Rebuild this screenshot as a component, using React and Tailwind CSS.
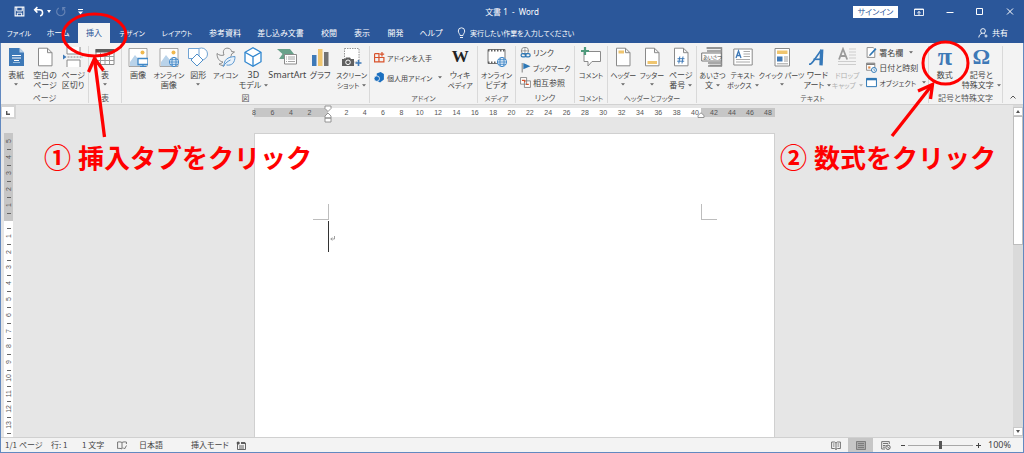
import React from "react";

/* ---------- small drawings ---------- */

const Svg = ({ children, className = "h-5 w-5" }) => (
  <svg viewBox="0 0 20 20" className={className} fill="none" aria-hidden="true">
    {children}
  </svg>
);

const Caret = ({ faded }) => (
  <svg viewBox="0 0 4 3" className="h-[3px] w-1 shrink-0" aria-hidden="true">
    <path d="M0 .3h4L2 2.6z" fill={faded ? "#b5b5b5" : "#666"} />
  </svg>
);

const Globe = ({ x, y, r = 5 }) => (
  <g transform={`translate(${x} ${y})`} stroke="#3f87c7" strokeWidth=".9">
    <circle r={r} fill="#eaf2fa" />
    <ellipse rx={r * 0.45} ry={r} />
    <path d={`M${-r} 0H${r}M${-r * 0.85} ${-r * 0.5}H${r * 0.85}M${-r * 0.85} ${r * 0.5}H${r * 0.85}`} />
  </g>
);

const Photo = () => (
  <>
    <path d="M1 1.5h18v18H1z" fill="#fff" stroke="#8f8f8f" strokeWidth=".8" />
    <path d="M2 15l5-7 4 5 2-2 5 5v3H2z" fill="#b9d3ea" />
    <circle cx="14.5" cy="5.5" r="2" fill="#efb84e" />
  </>
);

const PageShape = () => (
  <path d="M3.5 1.2h9l4.500 4.500v13.100H3.500z M12.500 1.200v4.500h4.500" fill="#fff" stroke="#8a8a8a" strokeWidth="1" />
);

const icons = {
  cover: (
    <Svg>
      <path d="M3 1h10.500L18 5.500V19H3z" fill="#3e79b7" />
      <path d="M13.500 1v4.500H18z" fill="#b8d0e8" />
      <path d="M6 8.500h9M6 11h9M8 13.500h5" stroke="#fff" />
      <path d="M7 15.500h7" stroke="#9cc0e0" />
    </Svg>
  ),
  blank: <Svg><PageShape /></Svg>,
  pageBreak: (
    <Svg>
      <path d="M4 0v7h13V0M4 20v-7h13v7" fill="#fff" stroke="#8a8a8a" />
      <path d="M4.500 10H20" stroke="#8a8a8a" strokeDasharray="2 1" />
      <path d="M0 7.500v5L3.500 10z" fill="#3e79b7" />
    </Svg>
  ),
  table: (
    <Svg>
      <path d="M1 2.500h18v15H1z" fill="#fff" stroke="#8a8a8a" />
      <path d="M.5 2h19v3.500H.5z" fill="#5d5d5d" />
      <path d="M1 9.500h18M1 13.500h18M5.500 5v12M10 5v12M14.500 5v12" stroke="#9a9a9a" />
    </Svg>
  ),
  picture: (
    <Svg>
      <Photo />
      <path d="M10 11.500h10v6H10z" fill="#fff" stroke="#3f87c7" strokeWidth="1.300" />
      <path d="M15 17.500v2M12 19.500h6" stroke="#3f87c7" strokeWidth="1.200" />
    </Svg>
  ),
  online: <Svg><Photo /><Globe x={15} y={15} r={4.6} /></Svg>,
  shapes: (
    <Svg>
      <circle cx="13.500" cy="7" r="6" fill="#fff" stroke="#70a3d3" />
      <path d="M.5 1.500H11v10H.5z" fill="#fff" stroke="#70a3d3" />
      <path d="M9 7l6 6-6 6-6-6z" fill="#fff" stroke="#4f8fca" />
    </Svg>
  ),
  bird: (
    <Svg>
      <path d="M8 8C6 3 9 .8 12 1.200c2.500.3 3.500 2 3.500 3.300l3 .5-3 2c0 2-1 3-2 4M8 8C5 9 3 8 1 6.500c0 5 2.500 8 6 8.500-1.500 1.500-3 2-4 2 2 1.500 4 1.800 6 1" stroke="#8a8a8a" />
      <path d="M8 19c0-6 3-9 11-9.500 0 6-3 9.500-8.500 8.500M7 20c1.500-3 4-5.500 7.500-7" fill="#e8f1fa" stroke="#5b98d0" />
    </Svg>
  ),
  cube: (
    <Svg>
      <path d="M10 .8l8 4.500v9.400l-8 4.500-8-4.500V5.300z" fill="#fff" stroke="#2f86cf" strokeWidth="1.300" />
      <path d="M2 5.300l8 4.500 8-4.500M10 9.800v9.400" stroke="#2f86cf" strokeWidth="1.300" />
    </Svg>
  ),
  smartArt: (
    <Svg>
      <path d="M0 2h13l4 5-4 5H2l3.500-5z" fill="#69a18a" />
      <path d="M7.500 7.500h12V17h-12z" fill="#fff" stroke="#8a8a8a" />
      <path d="M9 10h1M9 12h1M9 14.500h1M11 10h7M11 12h7M11 14.500h7" stroke="#9a9a9a" strokeWidth=".9" />
    </Svg>
  ),
  chart: (
    <Svg>
      <path d="M2 8h4.500v11H2z" fill="#3e79b7" />
      <path d="M8 2h4.500v17H8z" fill="#efc56f" />
      <path d="M14 5h4.500v14H14z" fill="#737373" />
    </Svg>
  ),
  screenshot: (
    <Svg>
      <path d="M2.500 1.500h14.500V15H2.500z" fill="#fff" stroke="#8a8a8a" strokeDasharray="1.500 1" strokeWidth=".9" />
      <path d="M0 12h3l1-1.500h4L9 12h3v7H0z" fill="#606060" />
      <circle cx="6" cy="15.300" r="2.300" fill="#606060" stroke="#fff" />
      <path d="M16.500 13v6M13.500 16h6" stroke="#3e79b7" strokeWidth="1.600" />
    </Svg>
  ),
  video: (
    <Svg>
      <path d="M1 2.500h17v14H1z" fill="#fff" stroke="#777" />
      <path d="M1 3.500h17M1 15.500h17" stroke="#5f5f5f" strokeWidth="2" strokeDasharray="1.500 1.500" />
      <Globe x={15} y={15} r={4.6} />
    </Svg>
  ),
  comment: (
    <Svg>
      <path d="M3 4.500h16.500v10H11L7 19v-4.500H3z" fill="#fff" stroke="#8a8a8a" />
      <path d="M4 0v8M0 4h8" stroke="#4f9a7c" strokeWidth="2.200" />
    </Svg>
  ),
  header: <Svg><PageShape /><path d="M5.500 3.500H11v3H5.500z" fill="#efc56f" /></Svg>,
  footer: <Svg><PageShape /><path d="M5.500 14h9.500v3H5.500z" fill="#efc56f" /></Svg>,
  pageNumber: (
    <Svg>
      <PageShape />
      <path d="M8.800 9.500l-1 7M12 9.500l-1 7M6.500 11.700h7M6.200 14.200h7" stroke="#3e79b7" />
    </Svg>
  ),
  greeting: (
    <span className="relative flex h-5 w-[22px] items-center justify-center">
      <svg viewBox="0 0 22 20" className="absolute inset-0 h-5 w-[22px]" fill="none" aria-hidden="true">
        <path d="M5.500 1h15v17.500h-12" fill="#ececec" stroke="#8a8a8a" strokeWidth="1.500" />
        <path d="M6 1h15M6 4h15M7 16h14M7 19h14" stroke="#909090" strokeWidth="1.300" />
        <path d="M.7 6h19.600v8H.7z" fill="#fff" stroke="#777" />
      </svg>
      <span className="relative whitespace-nowrap text-[5px] leading-[8px]">あいさつ</span>
    </span>
  ),
  textBox: (
    <Svg>
      <path d="M.8 2h18.400v16H.8z" fill="#fff" stroke="#8a8a8a" />
      <path d="M3 11l2.500-7L8 11M4 8.500h3" stroke="#3e79b7" strokeWidth="1.300" />
      <path d="M10.500 4.500H17M10.500 7H17M10.500 9.500H17M3 12.500h14M3 15h14" stroke="#a0a0a0" strokeWidth=".9" />
    </Svg>
  ),
  quickParts: (
    <Svg>
      <path d="M3 1.500h14.500v17.500H3z" fill="#fff" stroke="#8a8a8a" />
      <path d="M5 3.500h10.500v3.500H5z" fill="#efc56f" />
      <path d="M5 9.500h5.500v5H5z" fill="#3e79b7" />
      <path d="M12 10h4M12 12h4M12 14h4M5 16.800h11" stroke="#a0a0a0" />
    </Svg>
  ),
  wordArt: (
    <Svg>
      <path d="M2 17.300c2 0 3-1 4.500-3.300L14.200 3" stroke="#3578b9" strokeWidth="1.600" />
      <path d="M14.700 2.500L14 18.300" stroke="#3578b9" strokeWidth="3.400" />
      <path d="M6.500 12.300h7.500" stroke="#3578b9" strokeWidth="1.700" />
    </Svg>
  ),
  dropCap: (
    <Svg>
      <path d="M2 12.500L6 2l4.200 10.500M3.500 9h5.200" stroke="#9b9b9b" strokeWidth="1.800" />
      <path d="M12 2h7M12 5h7M12 8h7M12 11h7M1 14.500h18M1 17.500h18" stroke="#cdcdcd" strokeWidth="1.200" />
    </Svg>
  ),
};

const mini = {
  addins: (
    <Svg className="h-[11px] w-[11px]">
      <path d="M1 3h8v14M1 3v15h17v-8H1" stroke="#d9532c" strokeWidth="2.200" />
      <path d="M14.500 0v8M10.500 4h8" stroke="#d9532c" strokeWidth="2.200" />
    </Svg>
  ),
  myAddins: (
    <Svg className="h-[11px] w-[11px]">
      <path d="M5 2.500L12 0l6 3.500v10L11 19l-6-3z" fill="#1b6fc0" />
      <circle cx="5" cy="12" r="5" fill="#1b6fc0" stroke="#f3f3f3" strokeWidth="1.500" />
    </Svg>
  ),
  link: (
    <Svg className="h-[11px] w-[11px]">
      <circle cx="9" cy="7" r="6.500" fill="#fff" stroke="#7c7c7c" strokeWidth="1.600" />
      <path d="M9 .5v13M2.500 7h13" stroke="#7c7c7c" strokeWidth="1.300" />
      <rect x="2" y="12" width="9" height="6" rx="3" stroke="#2d77b5" strokeWidth="2.200" />
      <rect x="9.500" y="12" width="9" height="6" rx="3" stroke="#2d77b5" strokeWidth="2.200" />
    </Svg>
  ),
  bookmark: (
    <Svg className="h-[11px] w-[11px]">
      <path d="M4 2v17" stroke="#8a8a8a" strokeWidth="2" />
      <path d="M6 2l13 5.500L6 13z" fill="#2d77b5" />
    </Svg>
  ),
  crossRef: (
    <Svg className="h-[11px] w-[11px]">
      <path d="M1 1h11v12H1zM8 7h11v12H8z" fill="#fff" stroke="#7c7c7c" strokeWidth="1.500" />
      <path d="M3.500 6h5v4M11 13.500h5" stroke="#d9532c" strokeWidth="2.400" />
    </Svg>
  ),
  signature: (
    <Svg className="h-[11px] w-[11px]">
      <path d="M2 1h11l3 3v15H2z" fill="#fff" stroke="#7c7c7c" strokeWidth="1.500" />
      <path d="M7 15L18 3" stroke="#2d77b5" strokeWidth="3" />
      <path d="M5 17l3-3" stroke="#7c7c7c" strokeWidth="1.500" />
    </Svg>
  ),
  date: (
    <Svg className="h-[11px] w-[11px]">
      <path d="M1 2h15v13H1z" fill="#fff" stroke="#7c7c7c" strokeWidth="1.500" />
      <path d="M1 4h15" stroke="#7c7c7c" strokeWidth="3" />
      <path d="M4 8h4v4H4z" fill="#e08a4a" />
      <circle cx="14.500" cy="14.500" r="4.500" fill="#fff" stroke="#2d77b5" strokeWidth="1.800" />
      <path d="M14.500 12v3h2" stroke="#2d77b5" strokeWidth="1.300" />
    </Svg>
  ),
  object: (
    <Svg className="h-[11px] w-[11px]">
      <path d="M1 2.500h18v15H1z" fill="#fff" stroke="#2d77b5" strokeWidth="1.800" />
      <path d="M1 4h18" stroke="#2d77b5" strokeWidth="4" />
    </Svg>
  ),
};

/* ---------- ribbon pieces ---------- */

/* Long labels that are mostly kana are set one size down. */
function labelSize(text) {
  const kana = (text.match(/[\u3041-\u30ff]/g) || []).length;
  return text.length >= 4 && kana / text.length > 0.5 ? "text-[7px]" : "text-[8px]";
}

function Tool({ icon, lines, caret, faded, latin }) {
  const onLast = caret && lines.length > 1;
  return (
    <button type="button" className={`flex min-w-0 flex-col items-center ${faded ? "text-[#b0b0b0]" : ""}`}>
      <span className="mb-[3px] flex h-5 items-center justify-center">{icon}</span>
      {lines.map((line, i) => (
        <span
          key={line}
          className={`flex items-center gap-[3px] whitespace-nowrap leading-[10px] ${
            latin && i === 0 ? "font-['Noto_Sans'] text-[9px]" : labelSize(line)
          }`}
        >
          {line}
          {onLast && i === lines.length - 1 && <Caret faded={faded} />}
        </span>
      ))}
      {caret && !onLast && (
        <span className="flex h-2 items-center"><Caret faded={faded} /></span>
      )}
    </button>
  );
}

function Item({ icon, text, caret }) {
  return (
    <button type="button" className={`flex items-center gap-[2px] whitespace-nowrap leading-[10px] ${labelSize(text)}`}>
      {icon}
      <span>{text}</span>
      {caret && <span className="ml-1"><Caret /></span>}
    </button>
  );
}

function Group({ name, cols, children }) {
  return (
    <section aria-label={name} className="flex min-w-0 flex-col border-r border-[#d9d9d9] pt-px">
      <div className={`grid flex-1 items-start ${cols}`}>{children}</div>
      <h2 className={`whitespace-nowrap text-center leading-[10px] text-[#555] ${labelSize(name)}`}>{name}</h2>
    </section>
  );
}

const tabs = [
  ["ファイル", "w-[38px]"],
  ["ホーム", "w-10"],
  ["挿入", "w-8"],
  ["デザイン", "w-11"],
  ["レイアウト", "w-[46px]"],
  ["参考資料", "w-[50px]"],
  ["差し込み文書", "w-[61px]"],
  ["校閲", "w-9"],
  ["表示", "w-[30px]"],
  ["開発", "w-[37px]"],
  ["ヘルプ", "w-[34px]"],
];

function TitleBar() {
  return (
    <header className="grid h-[23px] shrink-0 grid-cols-[1fr_auto_1fr] items-center bg-[#2b579a] text-white">
      <div className="flex items-center gap-1 pl-[14px]">
        <button type="button" aria-label="上書き保存">
          <Svg className="h-[11px] w-[11px]">
            <path d="M2 2h16v16H2z" stroke="#fff" strokeWidth="2" />
            <path d="M5 2v7h10V2M6 18v-5h8v5" stroke="#fff" strokeWidth="1.800" />
          </Svg>
        </button>
        <button type="button" aria-label="元に戻す" className="ml-1 flex items-center gap-[3px]">
          <Svg className="h-[11px] w-[11px]">
            <path d="M8 2L3 7l5 5M3 7h9c7 0 7 9 1 11" stroke="#fff" strokeWidth="2.800" />
          </Svg>
          <svg viewBox="0 0 4 3" className="h-[3px] w-1" aria-hidden="true"><path d="M0 0h4L2 3z" fill="#fff" /></svg>
        </button>
        <button type="button" aria-label="やり直し">
          <Svg className="h-[11px] w-[11px]">
            <path d="M7 3.500a7.500 7.500 0 1 0 7 0M14 8V3h5" stroke="#6684b5" strokeWidth="2" />
          </Svg>
        </button>
        <button type="button" aria-label="クイック アクセス ツール バーのカスタマイズ" className="ml-2">
          <svg viewBox="0 0 5 6" className="h-[6px] w-[5px]" aria-hidden="true"><path d="M0 0h5v1H0zM0 2.500h5L2.500 5.500z" fill="#fff" /></svg>
        </button>
      </div>
      <h1 className="whitespace-pre font-['Noto_Sans','Noto_Sans_CJK_JP',sans-serif] text-[8px] leading-[12px]">文書 1  -  Word</h1>
      <div className="flex items-center justify-end pr-[10px]">
        <button type="button" className="h-3 w-[45px] bg-white text-[8px] leading-[12px] text-[#2b579a]">サインイン</button>
        <button type="button" aria-label="リボンの表示オプション" className="ml-4">
          <svg viewBox="0 0 10 8" className="h-2 w-[10px]" fill="none" stroke="#fff" aria-hidden="true">
            <path d="M.5 1h9v6.500h-9zM.5 1.500h9M5 7V3.500M3.300 5L5 3.500 6.700 5" strokeWidth=".9" />
          </svg>
        </button>
        <button type="button" aria-label="最小化" className="ml-[22px]">
          <svg viewBox="0 0 8 8" className="h-2 w-2" stroke="#fff" aria-hidden="true"><path d="M.5 4.500h7" /></svg>
        </button>
        <button type="button" aria-label="最大化" className="ml-[22px]">
          <svg viewBox="0 0 8 8" className="h-2 w-2" fill="none" stroke="#fff" aria-hidden="true"><path d="M.5 .500h6v6h-6z" /></svg>
        </button>
        <button type="button" aria-label="閉じる" className="ml-[22px]">
          <svg viewBox="0 0 8 8" className="h-2 w-2" fill="none" stroke="#fff" aria-hidden="true"><path d="M1 .5l6 6M7 .5l-6 6" /></svg>
        </button>
      </div>
    </header>
  );
}

function TabRow() {
  return (
    <nav className="flex h-5 shrink-0 items-stretch bg-[#2b579a] text-[8px] text-white">
      {tabs.map(([name, width]) => (
        <button
          key={name}
          type="button"
          className={`whitespace-nowrap text-center ${width} ${name === "挿入" ? "bg-[#f3f3f3] text-[#2b579a]" : ""} ${labelSize(name)}`}
        >
          {name}
        </button>
      ))}
      <label className="ml-[9px] flex items-center gap-1">
        <svg viewBox="0 0 9 12" className="h-3 w-[9px]" fill="none" stroke="#fff" aria-hidden="true">
          <path d="M3 8.500C3 7 1.300 6 1.300 4a3.200 3.200 0 0 1 6.400 0C7.700 6 6 7 6 8.500zM3 10.500h3" strokeWidth=".9" />
        </svg>
        <input
          type="text"
          aria-label="操作アシスト"
          placeholder="実行したい作業を入力してください"
          className="w-36 bg-transparent text-[7px] leading-[12px] outline-none placeholder:text-white"
        />
      </label>
      <button type="button" className="ml-auto flex items-center gap-1 pr-4">
        <svg viewBox="0 0 10 10" className="h-[10px] w-[10px]" fill="none" stroke="#fff" aria-hidden="true">
          <circle cx="5" cy="3" r="2.400" strokeWidth=".9" />
          <path d="M.8 9.500C1 7 2.500 5.800 4 5.400M6 5.400l1 .6M8 6.500v3M6.500 8h3" strokeWidth=".9" />
        </svg>
        共有
      </button>
    </nav>
  );
}

function Ribbon() {
  return (
    <div className="grid h-[62px] shrink-0 grid-cols-[88fr_33fr_248fr_108fr_38fr_59fr_33fr_89fr_232fr_74fr_20fr] border-b border-[#d2d2d2] bg-[#f3f3f3] pb-px pt-[3px] text-[#444]">
      <Group name="ページ" cols="grid-cols-[31fr_27fr_30fr]">
        <Tool icon={icons.cover} lines={["表紙"]} caret />
        <Tool icon={icons.blank} lines={["空白の", "ページ"]} />
        <Tool icon={icons.pageBreak} lines={["ページ", "区切り"]} />
      </Group>
      <Group name="表" cols="grid-cols-1">
        <Tool icon={icons.table} lines={["表"]} caret />
      </Group>
      <Group name="図" cols="grid-cols-[32fr_30fr_29fr_26fr_30fr_38fr_28fr_35fr]">
        <Tool icon={icons.picture} lines={["画像"]} />
        <Tool icon={icons.online} lines={["オンライン", "画像"]} />
        <Tool icon={icons.shapes} lines={["図形"]} caret />
        <Tool icon={icons.bird} lines={["アイコン"]} />
        <Tool icon={icons.cube} lines={["3D", "モデル"]} latin caret />
        <Tool icon={icons.smartArt} lines={["SmartArt"]} latin />
        <Tool icon={icons.chart} lines={["グラフ"]} />
        <Tool icon={icons.screenshot} lines={["スクリーン", "ショット"]} caret />
      </Group>
      <Group name="アドイン" cols="grid-cols-[74fr_34fr]">
        <div className="flex flex-col items-start gap-[9px] pl-1 pt-[5px]">
          <Item icon={mini.addins} text="アドインを入手" />
          <Item icon={mini.myAddins} text="個人用アドイン" caret />
        </div>
        <Tool
          icon={<span className="font-['Liberation_Serif'] text-[17px] font-bold leading-5 text-[#222]">W</span>}
          lines={["ウィキ", "ペディア"]}
        />
      </Group>
      <Group name="メディア" cols="grid-cols-1">
        <Tool icon={icons.video} lines={["オンライン", "ビデオ"]} />
      </Group>
      <Group name="リンク" cols="grid-cols-1">
        <div className="flex flex-col items-start gap-1 pl-1">
          <Item icon={mini.link} text="リンク" />
          <Item icon={mini.bookmark} text="ブックマーク" />
          <Item icon={mini.crossRef} text="相互参照" />
        </div>
      </Group>
      <Group name="コメント" cols="grid-cols-1">
        <Tool icon={icons.comment} lines={["コメント"]} />
      </Group>
      <Group name="ヘッダーとフッター" cols="grid-cols-[31fr_27fr_31fr]">
        <Tool icon={icons.header} lines={["ヘッダー"]} caret />
        <Tool icon={icons.footer} lines={["フッター"]} caret />
        <Tool icon={icons.pageNumber} lines={["ページ", "番号"]} caret />
      </Group>
      <Group name="テキスト" cols="grid-cols-[31fr_30fr_48fr_24fr_36fr_63fr]">
        <Tool icon={icons.greeting} lines={["あいさつ", "文"]} caret />
        <Tool icon={icons.textBox} lines={["テキスト", "ボックス"]} caret />
        <Tool icon={icons.quickParts} lines={["クイック パーツ"]} caret />
        <Tool icon={icons.wordArt} lines={["ワード", "アート"]} caret />
        <Tool icon={icons.dropCap} lines={["ドロップ", "キャップ"]} caret faded />
        <div className="flex flex-col items-start gap-1 pl-px">
          <Item icon={mini.signature} text="署名欄" caret />
          <Item icon={mini.date} text="日付と時刻" />
          <Item icon={mini.object} text="オブジェクト" caret />
        </div>
      </Group>
      <Group name="記号と特殊文字" cols="grid-cols-[32fr_42fr]">
        <Tool
          icon={<span className="font-['Liberation_Serif'] text-[26px] font-bold leading-5 text-[#3e79b7]">π</span>}
          lines={["数式"]}
        />
        <Tool
          icon={<span className="font-['Liberation_Serif'] text-[22px] font-bold leading-5 text-[#3e79b7]">Ω</span>}
          lines={["記号と", "特殊文字"]}
          caret
        />
      </Group>
      <button type="button" aria-label="リボンを折りたたむ" className="flex items-end justify-center pb-1">
        <svg viewBox="0 0 6 4" className="h-1 w-[6px]" fill="none" stroke="#555" aria-hidden="true"><path d="M.5 3.500L3 1l2.500 2.500" /></svg>
      </button>
    </div>
  );
}

/* ---------- rulers and document ---------- */

const Mark = ({ children }) => (
  <span className="flex w-0 justify-center whitespace-nowrap">{children}</span>
);

function HorizontalRuler() {
  const main = Array.from({ length: 20 }, (_, i) => (i + 1) * 2);
  return (
    <div className="relative flex h-[9px] w-[521px] font-['Liberation_Sans'] text-[7px] leading-[9px] text-[#555]">
      <div className="grid w-[74px] grid-cols-4 bg-[#c6c6c6]">
        {[8, 6, 4, 2].map((n) => <Mark key={n}>{n}</Mark>)}
      </div>
      <div className="grid flex-1 grid-cols-[repeat(20,1fr)] justify-items-end bg-white pr-[6px]">
        {main.map((n) => <Mark key={n}>{n}</Mark>)}
      </div>
      <div className="grid w-[74px] grid-cols-[repeat(4,18px)] justify-items-center bg-[#c6c6c6] pl-1">
        {[42, 44, 46, 48].map((n) => <Mark key={n}>{n}</Mark>)}
      </div>
      <svg viewBox="0 0 8 18" className="absolute -top-[3px] left-[70px] h-[18px] w-2" fill="#fff" stroke="#8a8a8a" aria-hidden="true">
        <path d="M1 1h6v2.500L4 6.500 1 3.500zM4 8l3 3v2H1v-2zM1 13h6v4H1z" strokeWidth=".9" />
      </svg>
      <svg viewBox="0 0 8 6" className="absolute left-[443px] top-1 h-[6px] w-2" fill="#fff" stroke="#8a8a8a" aria-hidden="true">
        <path d="M4 .8l3 2.700v2H1v-2z" strokeWidth=".9" />
      </svg>
    </div>
  );
}

const VNum = ({ children }) => (
  <span className="rotate-180 leading-[9px] [writing-mode:vertical-rl]">{children}</span>
);

function VerticalRuler() {
  return (
    <div className="ml-[3px] flex w-[9px] flex-1 flex-col overflow-hidden bg-white font-['Liberation_Sans'] text-[7px] text-[#555]">
      <div className="grid h-[88px] shrink-0 grid-rows-5 items-center justify-items-center bg-[#c6c6c6] pb-2">
        {[5, 4, 3, 2, 1].map((n) => (
          <span key={n} className="relative flex h-full w-full items-center justify-center">
            <VNum>{n}</VNum>
            <i className="absolute -bottom-px h-px w-1 bg-[#666]" />
          </span>
        ))}
      </div>
      <div className="mt-[7px] grid h-[205px] shrink-0 grid-rows-[repeat(13,1fr)]">
        {Array.from({ length: 13 }, (_, i) => (
          <span key={i} className="relative flex items-center justify-center">
            <i className="absolute top-0 h-px w-1 bg-[#666]" />
            <VNum>{i + 1}</VNum>
          </span>
        ))}
      </div>
      <i className="mx-auto h-px w-1 shrink-0 bg-[#666]" />
    </div>
  );
}

function ScrollBar() {
  return (
    <div className="flex w-[10px] shrink-0 flex-col bg-[#dadada] pt-[2px]">
      <button type="button" aria-label="上へスクロール" className="flex h-[9px] items-center justify-center border border-[#c9c9c9] bg-white">
        <svg viewBox="0 0 4 3" className="h-[3px] w-1" aria-hidden="true"><path d="M0 3h4L2 0z" fill="#555" /></svg>
      </button>
      <div className="h-[129px] border border-[#bdbdbd] bg-white" />
      <button type="button" aria-label="下へスクロール" className="mb-px mt-auto flex h-[9px] items-center justify-center border border-[#c9c9c9] bg-white">
        <svg viewBox="0 0 4 3" className="h-[3px] w-1" aria-hidden="true"><path d="M0 0h4L2 3z" fill="#555" /></svg>
      </button>
    </div>
  );
}

function Workspace() {
  return (
    <main className="flex min-h-0 flex-1 bg-[#e6e6e6]">
      <div className="flex w-[15px] shrink-0 flex-col">
        <div className="mb-[14px] flex h-[14px] items-end justify-center border-2 border-l border-[#d4d4d4] bg-white pb-[2px]">
          <svg viewBox="0 0 4 4" className="h-1 w-1" fill="none" stroke="#555" aria-hidden="true"><path d="M.7 0v3.300H4" strokeWidth="1.400" /></svg>
        </div>
        <VerticalRuler />
      </div>
      <div className="flex min-w-0 flex-1 flex-col items-center pt-[3px]">
        <HorizontalRuler />
        <article className="mt-4 flex w-[521px] flex-1 flex-col border border-b-0 border-[#d0d0d0] bg-white pl-[58px] pr-[57px] pt-[70px]">
          <div className="flex h-4 justify-between">
            <i className="w-4 border-b border-r border-[#bdbdbd]" />
            <i className="w-4 border-b border-l border-[#bdbdbd]" />
          </div>
          <div className="ml-[15px] mt-px flex h-[31px] items-center">
            <i className="h-full w-px bg-[#333]" />
            <svg viewBox="0 0 5 5" className="ml-px mt-1 h-[5px] w-[5px]" fill="none" stroke="#888" aria-hidden="true">
              <path d="M4.500 0v3H.8M2.300 1.500L.8 3l1.500 1.500" strokeWidth=".8" />
            </svg>
          </div>
        </article>
      </div>
      <ScrollBar />
    </main>
  );
}

function StatusBar() {
  return (
    <footer className="flex h-[15px] shrink-0 items-stretch border-t border-[#d0d0d0] bg-[#f3f3f3] text-[8px] leading-[14px] text-[#444]">
      <div className="flex items-center whitespace-nowrap pl-1">
        <span className="w-[46px]">1/1 ページ</span>
        <span className="w-[31px]">行: 1</span>
        <span className="w-[35px]">1 文字</span>
        <svg viewBox="0 0 10 9" className="h-[9px] w-[10px]" fill="none" stroke="#666" aria-hidden="true">
          <path d="M5 1.500C4 .8 2 .8.600 1v6.500c1.400-.2 3.400-.2 4.400.5V1.500C6 .8 8 .8 9.400 1v2M6 6.500L7.500 8l2-3.500" strokeWidth=".9" />
        </svg>
        <span className="ml-3 w-[52px]">日本語</span>
        <span className="w-[45px]">挿入モード</span>
        <svg viewBox="0 0 10 9" className="h-[9px] w-[10px]" fill="none" stroke="#555" aria-hidden="true">
          <path d="M1.500 3v5.500h8V2H5M3 5h5M3 7h5" strokeWidth=".9" />
          <circle cx="2.200" cy="2" r="1.600" fill="#555" stroke="none" />
          <path d="M5 2h4" strokeWidth="1.800" />
        </svg>
      </div>
      <div className="ml-auto flex items-stretch pr-3">
        <button type="button" aria-label="閲覧モード" className="flex w-6 items-center justify-center">
          <svg viewBox="0 0 10 9" className="h-[9px] w-[10px]" fill="none" stroke="#666" aria-hidden="true">
            <path d="M5 2v6.500M.6 1h3L5 2l1.400-1h3v6.500h-3L5 8.500l-1.400-1h-3zM2 3h1.500M2 5h1.500M6.500 3H8M6.500 5H8" strokeWidth=".9" />
          </svg>
        </button>
        <button type="button" aria-label="印刷レイアウト" className="flex w-[25px] items-center justify-center bg-[#c6c6c6]">
          <svg viewBox="0 0 10 9" className="h-[9px] w-[10px]" fill="#a8a8a8" stroke="#777" aria-hidden="true">
            <path d="M.5.5h9v8h-9zM2 2.500h6M2 4.500h6M2 6.500h6" strokeWidth=".9" />
          </svg>
        </button>
        <button type="button" aria-label="Web レイアウト" className="flex w-[25px] items-center justify-center">
          <svg viewBox="0 0 10 9" className="h-[9px] w-[10px]" fill="none" stroke="#666" aria-hidden="true">
            <path d="M4 8H.7V.6h7.600V3M2 2.500h5M2 4.500h2.500M2 6.200h2" strokeWidth=".9" />
            <circle cx="7" cy="6.300" r="2.200" strokeWidth="1" />
            <path d="M5.500 5l3 2.500" strokeWidth=".8" />
          </svg>
        </button>
        <button type="button" aria-label="縮小" className="flex w-[10px] items-center justify-center">
          <i className="h-px w-1 bg-[#444]" />
        </button>
        <label className="flex items-center">
          <input
            type="range"
            aria-label="ズーム"
            min="0"
            max="100"
            defaultValue="50"
            className="h-px w-[65px] appearance-none bg-[#a8a8a8] [&::-webkit-slider-thumb]:h-2 [&::-webkit-slider-thumb]:w-[3px] [&::-webkit-slider-thumb]:appearance-none [&::-webkit-slider-thumb]:bg-[#555]"
          />
        </label>
        <button type="button" aria-label="拡大" className="flex w-[10px] items-center justify-center">
          <svg viewBox="0 0 5 5" className="h-[5px] w-[5px]" stroke="#444" aria-hidden="true"><path d="M2.500 0v5M0 2.500h5" /></svg>
        </button>
        <span className="ml-[5px] font-['Noto_Sans'] text-[9px]">100%</span>
      </div>
    </footer>
  );
}

/* ---------- guide notes drawn over the window ---------- */

function Notes() {
  return (
    <div className="pointer-events-none">
      <svg viewBox="0 0 70 130" className="absolute left-[60px] top-[10px] h-[130px] w-[70px]" fill="none" stroke="#f00" aria-hidden="true">
        <ellipse cx="34.500" cy="25" rx="31.500" ry="21" strokeWidth="3" />
        <path d="M34.500 49L44.500 127" strokeWidth="3.300" />
        <path d="M28.500 62L34.500 48.500 43.500 60.500" strokeWidth="3.300" />
      </svg>
      <svg viewBox="0 0 84 100" className="absolute left-[887px] top-[39px] h-[100px] w-[84px]" fill="none" stroke="#f00" aria-hidden="true">
        <ellipse cx="58.500" cy="24" rx="22.500" ry="21" strokeWidth="3" />
        <path d="M5 97L45 46" strokeWidth="3.300" />
        <path d="M31 52L45.500 45.500 43.500 60" strokeWidth="3.300" />
      </svg>
      <p className="absolute left-11 top-[141px] flex items-center gap-[7px] whitespace-nowrap text-[26px] font-bold leading-8 text-[#f00] [font-feature-settings:normal]">
        <span className="text-[27px]">①</span>
        <span>挿入タブをクリック</span>
      </p>
      <p className="absolute left-[780px] top-[141px] flex items-center gap-[7px] whitespace-nowrap text-[26px] font-bold leading-8 text-[#f00] [font-feature-settings:normal]">
        <span className="text-[27px]">②</span>
        <span>数式をクリック</span>
      </p>
    </div>
  );
}

export default function App() {
  return (
    <div lang="ja" className="relative flex h-screen flex-col overflow-hidden font-['Noto_Sans_CJK_JP',sans-serif] [font-feature-settings:'palt'] [&_button]:[font-feature-settings:'palt'] [&_input]:[font-feature-settings:'palt']">
      <TitleBar />
      <TabRow />
      <div className="flex min-h-0 flex-1 flex-col border-x border-b border-[#6289c0]">
        <Ribbon />
        <Workspace />
        <StatusBar />
      </div>
      <Notes />
    </div>
  );
}
